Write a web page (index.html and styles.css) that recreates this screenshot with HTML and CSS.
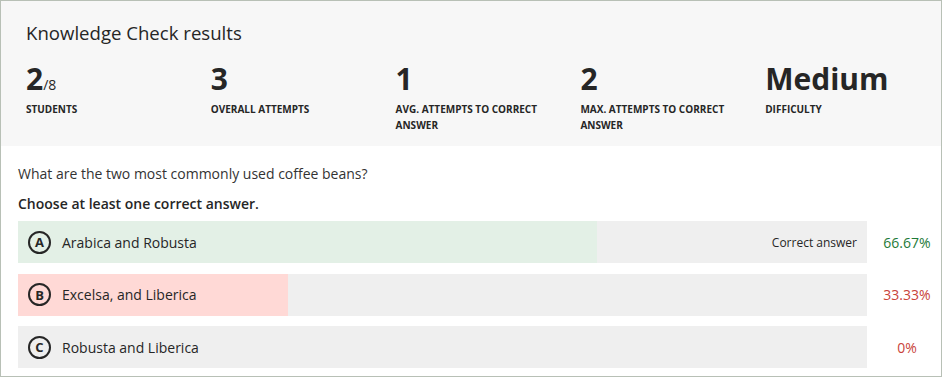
FILE: index.html
```html
<!DOCTYPE html>
<html lang="en">
<head>
  <meta charset="UTF-8">
  <meta name="viewport" content="width=device-width, initial-scale=1.0">
  <title>Knowledge Check results</title>
  <link rel="stylesheet" href="styles.css">
</head>
<body>

  <div class="panel">
    <div class="summary">
      <h2>Knowledge Check results</h2>
      <div class="stats">
        <div class="stat">
          <div class="value">2<span class="total">/8</span></div>
          <div class="label">Students</div>
        </div>
        <div class="stat">
          <div class="value">3</div>
          <div class="label">Overall attempts</div>
        </div>
        <div class="stat">
          <div class="value">1</div>
          <div class="label">Avg. attempts to correct answer</div>
        </div>
        <div class="stat">
          <div class="value">2</div>
          <div class="label">Max. attempts to correct answer</div>
        </div>
        <div class="stat">
          <div class="value">Medium</div>
          <div class="label">Difficulty</div>
        </div>
      </div>
    </div>

    <div class="question">
      <p class="prompt">What are the two most commonly used coffee beans?</p>
      <p class="hint">Choose at least one correct answer.</p>

      <div class="answer">
        <div class="bar">
          <div class="fill correct" style="width: 68.2%"></div>
          <span class="letter">A</span>
          <span class="text">Arabica and Robusta</span>
          <span class="tag">Correct answer</span>
        </div>
        <div class="percent good">66.67%</div>
      </div>

      <div class="answer">
        <div class="bar">
          <div class="fill wrong" style="width: 31.8%"></div>
          <span class="letter">B</span>
          <span class="text">Excelsa, and Liberica</span>
        </div>
        <div class="percent bad">33.33%</div>
      </div>

      <div class="answer">
        <div class="bar">
          <span class="letter">C</span>
          <span class="text">Robusta and Liberica</span>
        </div>
        <div class="percent bad">0%</div>
      </div>
    </div>
  </div>

</body>
</html>
```

FILE: styles.css
```css
body {
  font-family: "Open Sans", Arial, sans-serif;
  color: #262626;
  background: #ffffff;
  margin: 0;
}

.panel {
  width: 942px;
  height: 377px;
  box-sizing: border-box;
  border: 1px solid #b8c0b6;
}

.summary {
  background: #f7f7f7;
  padding: 20px 0 13px 25px;
}

h2 {
  margin: 0 0 16px 0;
  font-size: 18.6px;
  font-weight: 400;
  line-height: 24px;
}

.stats {
  display: grid;
  grid-template-columns: repeat(4, 184.8px) 1fr;
}

.value {
  font-size: 30px;
  font-weight: 700;
  line-height: 36px;
}

.total {
  font-size: 14px;
  font-weight: 400;
  line-height: 0;
}

.label {
  margin-top: 4px;
  max-width: 160px;
  font-size: 10px;
  font-weight: 700;
  line-height: 16px;
  text-transform: uppercase;
}

.question {
  padding: 18px 0 0 17px;
}

.prompt, .hint {
  margin: 0 0 10px 0;
  font-size: 14px;
  line-height: 20px;
}

.prompt {
  color: #333333;
}

.hint {
  font-weight: 600;
  margin-bottom: 7px;
}

.answer {
  display: flex;
  align-items: center;
  margin-bottom: 10.5px;
}

.bar {
  position: relative;
  flex: 0 0 849px;
  height: 42px;
  background: #efefef;
  display: flex;
  align-items: center;
  padding: 0 10px;
  box-sizing: border-box;
}

.fill {
  position: absolute;
  top: 0;
  left: 0;
  bottom: 0;
}

.fill.correct {
  background: #e3f0e6;
}

.fill.wrong {
  background: #ffd9d6;
}

.letter {
  position: relative;
  width: 23px;
  height: 23px;
  box-sizing: border-box;
  border: 2px solid #262626;
  border-radius: 50%;
  display: flex;
  align-items: center;
  justify-content: center;
  font-size: 13px;
  font-weight: 700;
  margin-right: 11px;
}

.text {
  position: relative;
  font-size: 14px;
}

.tag {
  position: relative;
  margin-left: auto;
  font-size: 12px;
}

.percent {
  width: 74px;
  padding-left: 6px;
  box-sizing: border-box;
  text-align: center;
  font-size: 14px;
}

.percent.good {
  color: #1e7a38;
}

.percent.bad {
  color: #c9433a;
}
```
